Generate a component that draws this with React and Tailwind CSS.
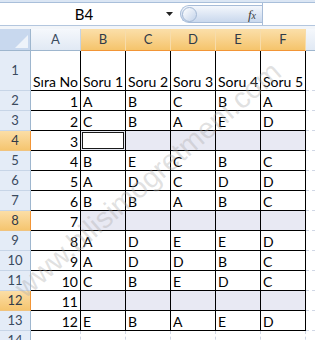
import React from 'react';

const colLetters = ['A', 'B', 'C', 'D', 'E', 'F'];

const rows = [
  ['Sıra No', 'Soru 1', 'Soru 2', 'Soru 3', 'Soru 4', 'Soru 5'],
  [1, 'A', 'B', 'C', 'B', 'A'],
  [2, 'C', 'B', 'A', 'E', 'D'],
  [3, '', '', '', '', ''],
  [4, 'B', 'E', 'C', 'B', 'C'],
  [5, 'A', 'D', 'C', 'D', 'D'],
  [6, 'B', 'B', 'A', 'B', 'C'],
  [7, '', '', '', '', ''],
  [8, 'A', 'D', 'E', 'E', 'D'],
  [9, 'A', 'D', 'D', 'B', 'C'],
  [10, 'C', 'B', 'E', 'D', 'C'],
  [11, '', '', '', '', ''],
  [12, 'E', 'B', 'A', 'E', 'D'],
];

const selectedRows = [4, 8, 12];

const RowHead = ({ n, on }) => (
  <div
    className={
      'flex items-center justify-center border-r border-b text-[13px] ' +
      (on
        ? 'bg-gradient-to-b from-[#fbdea6] to-[#f5c56f] border-r-[#f29536] border-b-[#f0c37e] text-[#2f3a48]'
        : 'bg-[#e4ecf7] border-r-[#9eb6ce] border-b-[#c7d5e7] text-[#3a4a5e]')
    }
  >
    {n}
  </div>
);

const App = () => {
  return (
    <div className="relative h-[340px] w-[315px] overflow-hidden bg-white font-['Lato','Liberation_Sans',sans-serif]">
      {/* ribbon edge */}
      <div className="h-[3px] border-b border-[#a9bfda] bg-[#dbe6f4]" />

      {/* name box + formula bar */}
      <div className="flex h-[23px] border-b border-[#b3c6de] bg-white">
        <div className="flex w-[180px] items-center">
          <span className="flex-1 pl-[2px] text-center text-[15px] text-black">B4</span>
          <svg width="8" height="5" viewBox="0 0 8 5" className="mr-[6px]">
            <path d="M0 0h7L3.5 4z" fill="#222" />
          </svg>
        </div>
        <div className="my-[2px] flex w-[82px] items-center rounded-l-full border border-r-0 border-[#a7bcd8] bg-gradient-to-b from-[#f4f7fc] to-[#c9d8ed]">
          <div className="ml-[1px] h-[15px] w-[15px] rounded-full border border-[#a3b8d4] bg-gradient-to-br from-white to-[#c3d3ea]" />
          <span className="ml-auto mr-[6px] font-['Liberation_Serif'] text-[13px] italic leading-none text-[#3b3b3b]">
            f<span className="text-[10px]">x</span>
          </span>
        </div>
        <div className="flex-1 border-l border-[#a7bcd8] bg-white" />
      </div>

      <div className="h-[3px] bg-[#f2f5f9]" />

      {/* sheet */}
      <div className="grid grid-cols-[31px_50px_45px_45px_45px_45px_45px_1fr] grid-rows-[22px_40px_repeat(12,20px)_20px] text-[14px] text-black">
        {/* column headers */}
        <div className="flex items-end justify-end border-r border-b border-r-[#9eb6ce] border-b-[#9eb6ce] bg-[#c8d8ee] p-[2px]">
          <svg width="13" height="13" viewBox="0 0 13 13">
            <path d="M13 0V13H0z" fill="#eef3fa" />
          </svg>
        </div>
        {colLetters.map((c) => (
          <div
            key={c}
            className={
              'flex items-center justify-center border-r border-b text-[13px] ' +
              (c === 'A'
                ? 'bg-gradient-to-b from-[#f5f8fc] to-[#e1e9f4] border-r-[#c5d3e4] border-b-[#9eb6ce] text-[#3a4a5e]'
                : 'bg-gradient-to-b from-[#fbdfa9] to-[#f5c46b] border-r-[#f7dcaa] border-b-[#f29536] text-[#2f3a48]')
            }
          >
            {c}
          </div>
        ))}
        <div className="border-b border-b-[#9eb6ce] bg-gradient-to-b from-[#f5f8fc] to-[#e1e9f4]" />

        {/* rows */}
        {rows.map((r, i) => {
          const n = i + 1;
          const on = selectedRows.includes(n);
          return (
            <React.Fragment key={n}>
              <RowHead n={n} on={on} />
              {r.map((v, j) => {
                const isNum = typeof v === 'number';
                const fill = on && j > 0;
                const active = n === 4 && j === 1;
                return (
                  <div
                    key={j}
                    className={
                      'flex items-end overflow-visible whitespace-nowrap border-r border-b border-black leading-[16px] ' +
                      (isNum ? 'justify-end pr-[2px] ' : 'pl-[2px] ') +
                      (active
                        ? 'bg-white shadow-[inset_0_0_0_1px_#e8eaf3,inset_0_0_0_2px_#1a1a1a]'
                        : fill
                        ? 'bg-[#e8e9f3]'
                        : 'bg-white')
                    }
                  >
                    {v}
                  </div>
                );
              })}
              <div className="border-b border-dashed border-[#d0d7e5]" />
            </React.Fragment>
          );
        })}

        {/* row 14 */}
        <RowHead n={14} on={false} />
        {colLetters.map((c) => (
          <div key={c} className="border-r border-dashed border-[#d0d7e5]" />
        ))}
        <div />
      </div>

      {/* watermark */}
      <span className="pointer-events-none absolute left-[148px] top-[180px] -translate-x-1/2 -translate-y-1/2 -rotate-[41deg] whitespace-nowrap font-['Liberation_Sans'] text-[29px] text-[#a8a8a8]/35">
        www.bilisimogretmeni.com
      </span>
    </div>
  );
};

export default App;
